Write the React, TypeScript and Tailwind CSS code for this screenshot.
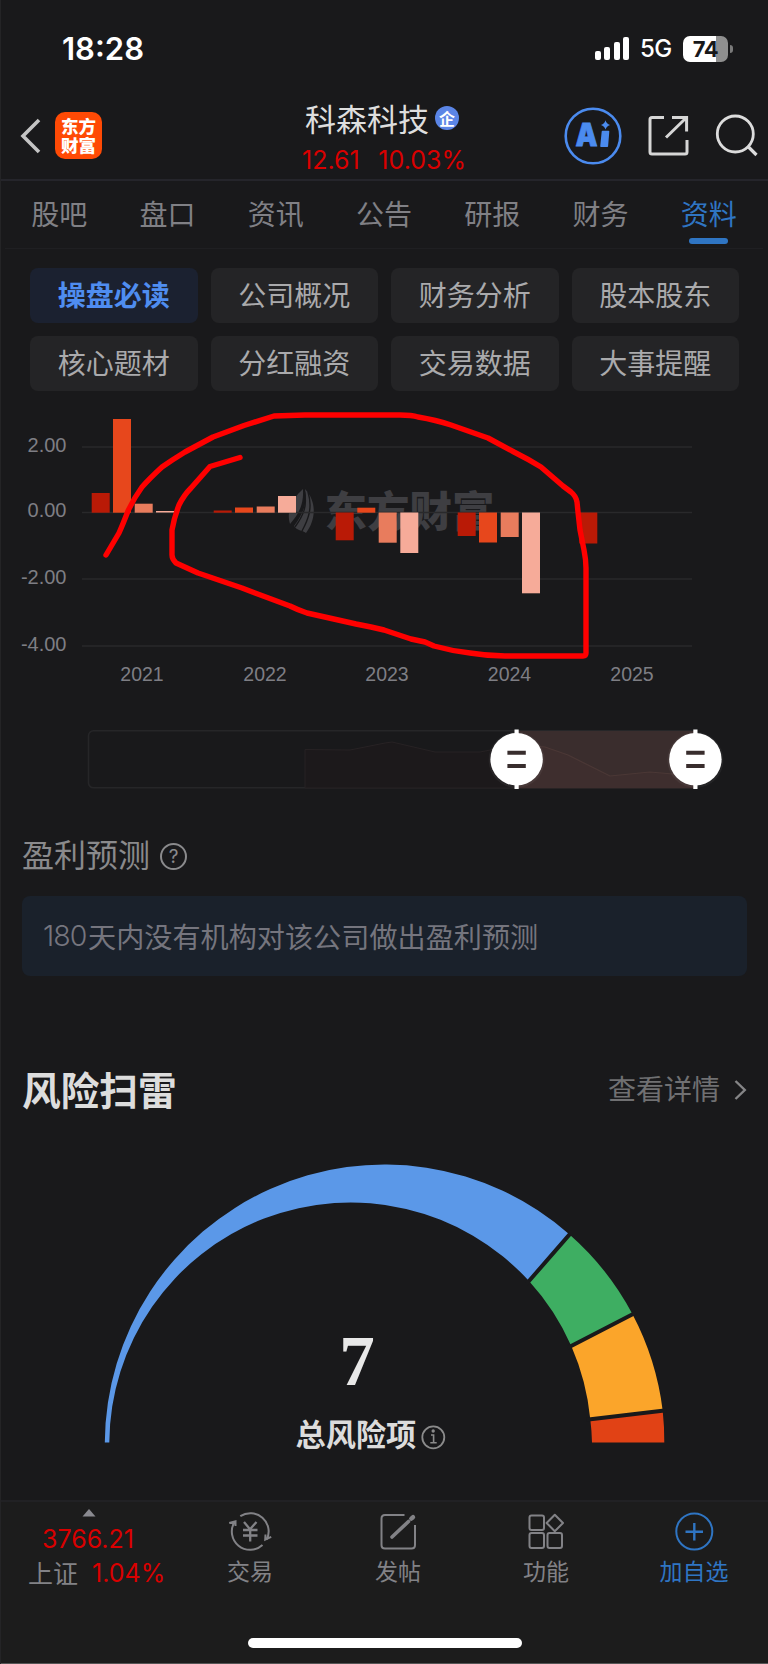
import { clsx } from "clsx";
import type { ReactNode } from "react";

const TABS = ["股吧", "盘口", "资讯", "公告", "研报", "财务", "资料"];

const SECTIONS = [
  "操盘必读",
  "公司概况",
  "财务分析",
  "股本股东",
  "核心题材",
  "分红融资",
  "交易数据",
  "大事提醒",
];

const GRID_LINES = [
  { y: 447, label: "2.00" },
  { y: 512.5, label: "0.00" },
  { y: 579, label: "-2.00" },
  { y: 646, label: "-4.00" },
];

const YEARS = [
  { x: 142, label: "2021" },
  { x: 265, label: "2022" },
  { x: 387, label: "2023" },
  { x: 509.5, label: "2024" },
  { x: 632, label: "2025" },
];

// Q1..Q4 colours
const QUARTERS = ["#b91a06", "#e7471c", "#e87c5d", "#f6ab99"];

type Bar = { x: number; top: number; bottom: number; q: number };

const BARS: Bar[] = [
  { x: 91.7, top: 493, bottom: 512.7, q: 0 },
  { x: 113, top: 419, bottom: 512.7, q: 1 },
  { x: 134.7, top: 503.7, bottom: 512.7, q: 2 },
  { x: 156, top: 511, bottom: 512.5, q: 3 },
  { x: 213.7, top: 510.5, bottom: 512.7, q: 0 },
  { x: 235, top: 507.5, bottom: 512.7, q: 1 },
  { x: 256.7, top: 506.5, bottom: 512.7, q: 2 },
  { x: 278, top: 496, bottom: 512.7, q: 3 },
  { x: 335.7, top: 512.5, bottom: 540.3, q: 0 },
  { x: 357.3, top: 507.7, bottom: 512.7, q: 1 },
  { x: 378.7, top: 512.5, bottom: 542.7, q: 2 },
  { x: 400.3, top: 512.5, bottom: 553, q: 3 },
  { x: 457.7, top: 512.5, bottom: 536, q: 0 },
  { x: 479, top: 512.5, bottom: 542.5, q: 1 },
  { x: 500.7, top: 512.5, bottom: 537, q: 2 },
  { x: 522, top: 512.5, bottom: 593.3, q: 3 },
  { x: 579.3, top: 512.5, bottom: 543.5, q: 0 },
];

const MARKER =
  "M106 555 L119 533 Q123 524 128 511 Q134 498 142 487 Q150 478 162 467 Q172 460 185 452 L213 437 L244 425.5 L274 416 L305 415 L400 415 Q412 415 418 417 Q436 420 451 425 L488 438 L514 452 Q528 459 541 467 L563 486 L571 492 Q576 496 577 502 L578 512 L580 530 L584 550 Q586 560 586 568 L586 653 Q586 656 583 656 L505 656 Q488 656 470 653 Q452 651 434 646 L425 642 L411 639 L384 630 L371 627 L356 624 L307 613 Q298 610 290 606 L255 593 L242 588 L198 573 L176 563 Q172 559 172 555 L172 530 Q174 518 179 505 Q184 495 191 488 L210 466.5 L240 457.5";

function StatusBar() {
  return (
    <div className="flex h-[90px] items-start justify-between pl-[62px] pr-[35px]">
      <span className="mt-[31px] font-[Inter] text-[31px] leading-9 font-semibold text-white">18:28</span>
      <div className="mt-[35px] flex h-[27px] items-center">
        <div className="mr-[11px] flex h-[23px] items-end gap-[3.3px]">
          <span className="h-[9px] w-[6px] rounded-[2px] bg-white" />
          <span className="h-[13px] w-[6px] rounded-[2px] bg-white" />
          <span className="h-[18px] w-[6px] rounded-[2px] bg-white" />
          <span className="h-[23px] w-[6px] rounded-[2px] bg-white" />
        </div>
        <span className="mt-px mr-[11px] w-[32px] font-[Inter] text-[24px] leading-none font-medium tracking-[-0.5px] text-white">5G</span>
        <div className="flex h-[26px] w-[45px] items-center justify-center rounded-[7px] bg-linear-to-r from-white from-74% to-[#8f8f8f] to-74% font-[Inter] text-[22px] leading-none font-bold tracking-[-0.5px] text-[#18181a]">
          74
        </div>
        <span className="ml-[2px] h-2 w-[3px] rounded-r-full bg-[#7a7a7a]" />
      </div>
    </div>
  );
}

function Header() {
  return (
    <header className="flex h-[91px] items-start border-b-2 border-[#25252b]">
      <svg className="mt-[28px] ml-[20px]" width="21" height="36" viewBox="0 0 21 36" fill="none" stroke="#c4c4c4" strokeWidth="3.6">
        <path d="M19 2 L3 18 L19 34" />
      </svg>
      <div className="mt-[22px] ml-[14px] flex size-[47px] items-center justify-center rounded-[10px] bg-[#ff4a05] pb-px text-center font-['Noto_Sans_CJK_SC',sans-serif] text-[17.5px] leading-[19.5px] font-black text-white">
        <span className="w-[35px] break-all">东方财富</span>
      </div>
      <div className="mt-[12px] ml-[199px] w-[169px]">
        <div className="flex items-center pl-1">
          <h1 className="text-[31px] leading-8 text-[#dedede]">科森科技</h1>
          <span className="ml-[6px] flex size-6 items-center justify-center rounded-full bg-[#5b85e6] text-[16px] leading-none font-bold text-white">
            企
          </span>
        </div>
        <div className="mt-[11px] flex justify-between pl-px font-[Inter] text-[25px] leading-[30px] text-[#d90000]">
          <span>12.61</span>
          <span className="mr-1">10.03%</span>
        </div>
      </div>
      <svg className="mt-[17px] ml-[94px]" width="204" height="60" viewBox="564 107 204 60" fill="none">
        <circle cx="593" cy="136" r="27.3" stroke="#4b8bef" strokeWidth="2.6" />
        <text
          x="575.5"
          y="146"
          fontFamily="Inter, sans-serif"
          fontSize="32"
          fontWeight="900"
          fill="#4b8bef"
          stroke="#4b8bef"
          strokeWidth="0.8"
          textLength="22"
          lengthAdjust="spacingAndGlyphs"
        >
          A
        </text>
        <path d="M602.5 131.5 H608.5 L607.3 146.3 H601 Z" fill="#4b8bef" stroke="#4b8bef" strokeWidth="1.6" strokeLinejoin="round" />
        <path d="M605.5 120.3 Q606.5 124 610 125 Q606.5 126 605.5 129.5 Q604.5 126 601 125 Q604.5 124 605.5 120.3 Z" fill="#4b8bef" />
        <path d="M664 117.4 H652 Q650 117.4 650 119.4 V152 Q650 154 652 154 H685 Q687 154 687 152 V140 M672 117.4 H686.6 V131.5 M686 118 L666 137.5" stroke="#d6d6d6" strokeWidth="3" />
        <circle cx="735.3" cy="134" r="18" stroke="#dcdcdc" strokeWidth="2.8" />
        <path d="M748 146.5 L756.5 155" stroke="#dcdcdc" strokeWidth="3.2" />
      </svg>
    </header>
  );
}

function TabBar() {
  return (
    <nav className="mx-[5px] flex h-[68px] border-b border-[#1f1f22]">
      {TABS.map((tab) => {
        const active = tab === "资料";
        return (
          <div
            key={tab}
            className={clsx(
              "flex w-[108.3px] flex-col items-center pt-[17px] text-[28px] leading-[30px]",
              active ? "text-[#2f75c3]" : "text-[#808085]"
            )}
          >
            {tab}
            {active && <span className="mt-[10px] h-[6px] w-[39px] rounded-full bg-[#2f75c3]" />}
          </div>
        );
      })}
    </nav>
  );
}

function SectionGrid() {
  return (
    <div className="grid h-[151px] grid-cols-4 content-start gap-x-[13px] gap-y-[13px] pt-[19px] pr-[29px] pl-[30px]">
      {SECTIONS.map((name, i) => (
        <button
          key={name}
          type="button"
          className={clsx(
            "flex h-[55px] items-center justify-center rounded-lg pb-[3px] text-[28px] leading-none",
            i === 0 ? "bg-[#1b2130] font-bold text-[#4f8df0]" : "bg-[#242426] text-[#aaaaac]"
          )}
        >
          {name}
        </button>
      ))}
    </div>
  );
}

function ProfitChart() {
  return (
    <svg className="block" width="768" height="300" viewBox="0 400 768 300" fontFamily="Liberation Sans, sans-serif">
      <g fill="#3e3e42">
        <path d="M303 489 C292 499 286 511 290 524 C298 515 304 505 303 489 Z" />
        <path d="M305 489 C308 504 302 515 294 526 C297 531 302 530 306 533 C315 521 318 503 305 489 Z" />
        <text x="324.5" y="526.5" fontFamily="Noto Sans CJK SC, sans-serif" fontSize="42.5" fontWeight="900">
          东方财富
        </text>
      </g>
      <path d="M304 490 C308 506 303 516 295 527 M308 492 C313 508 308 520 302 531" fill="none" stroke="#19191b" strokeWidth="1.4" />
      {GRID_LINES.map((line) => (
        <g key={line.label}>
          <path d={`M82 ${line.y} H692`} stroke="#29292b" strokeWidth="1.6" />
          <text x="66.5" y={line.y + 4.8} textAnchor="end" fontSize="20" fill="#7e7e84">
            {line.label}
          </text>
        </g>
      ))}
      {YEARS.map((year) => (
        <text key={year.label} x={year.x} y="681" textAnchor="middle" fontSize="19.5" fill="#7e7e84">
          {year.label}
        </text>
      ))}
      {BARS.map((bar) => (
        <rect key={bar.x} x={bar.x} y={bar.top} width="18" height={bar.bottom - bar.top} fill={QUARTERS[bar.q]} />
      ))}
      <path d={MARKER} fill="none" stroke="#ff0000" strokeWidth="5.4" strokeLinecap="round" strokeLinejoin="round" />
    </svg>
  );
}

function SliderHandle({ x }: { x: number }) {
  return (
    <g>
      <circle cx={x} cy="760" r="28" fill="#ffffff" opacity="0.05" />
      <path d={`M${x} 729.5 V789`} stroke="#ffffff" strokeWidth="4.2" />
      <circle cx={x} cy="759.3" r="26.2" fill="#ffffff" />
      <path d={`M${x - 9.2} 752.8 h18.4 M${x - 9.2} 766 h18.4`} stroke="#382d2d" strokeWidth="4" />
    </g>
  );
}

function RangeSlider() {
  const trend = "305 749.5 350 750 385 743 392 742 435 752 480 752 516 745 545 747 568 755 610 776 650 772 695 776";
  return (
    <svg className="block" width="768" height="100" viewBox="0 700 768 100" fill="none">
      <rect x="88.5" y="730.8" width="607" height="57" rx="5" stroke="#262628" strokeWidth="1.6" />
      <polygon points={`305 788 ${trend} 695 788`} fill="#1c191b" stroke="#272224" />
      <rect x="516.5" y="731" width="179" height="57.3" fill="#3a2d2d" />
      <polygon points="516 788 516 745 545 747 568 755 610 776 650 772 695 776 695 788" fill="#3e2e2e" />
      <polyline points="516 745 545 747 568 755 610 776 650 772 695 776" stroke="#4b3836" strokeWidth="1.2" />
      <SliderHandle x={516.6} />
      <SliderHandle x={695.4} />
    </svg>
  );
}

function Forecast() {
  return (
    <section className="h-[260px] px-[22px] pt-[36px]">
      <div className="flex items-center">
        <h2 className="text-[32px] leading-[34px] text-[#8a8a8c]">盈利预测</h2>
        <span className="mt-[6px] ml-[10px] flex size-[27px] items-center justify-center rounded-full border-2 border-[#8a8a8c] font-[Inter] text-[19px] leading-none text-[#8a8a8c]">
          ?
        </span>
      </div>
      <div className="mt-[26px] flex h-[80px] w-[725px] items-center rounded-lg bg-[#1a212b] pt-px pl-[21px] text-[28.15px] leading-none text-[#75757e]">
        <span className="w-[45px] font-[Inter] text-[28.5px] font-light tracking-[-1px]">180</span>
        天内没有机构对该公司做出盈利预测
      </div>
    </section>
  );
}

function RiskGauge() {
  return (
    <section className="h-[440px]">
      <div className="flex h-[60px] items-center justify-between pr-[21px] pb-1 pl-[22px]">
        <h2 className="text-[38.7px] leading-none font-bold text-[#dddddd]">风险扫雷</h2>
        <div className="flex items-center text-[28px] leading-none text-[#707072]">
          查看详情
          <svg className="mt-[3px] ml-[14px]" width="13" height="20" viewBox="0 0 13 20" fill="none" stroke="#858587" strokeWidth="2.4">
            <path d="M1.5 1 L10.8 10 L1.5 19" />
          </svg>
        </div>
      </div>
      <svg className="block" width="768" height="380" viewBox="0 1120 768 380">
        <path d="M104.8 1442.6 A279.7 279.7 0 0 1 569.5 1234.5 L529 1281 A241.5 241.5 0 0 0 109.3 1442.6 Z" fill="#5b98e8" />
        <path d="M569.5 1234.5 A279.7 279.7 0 0 1 632.5 1314.3 L571.3 1346 A241.5 241.5 0 0 0 529 1281 Z" fill="#3eae62" />
        <path d="M632.5 1314.3 A279.7 279.7 0 0 1 662.7 1410.7 L590.3 1419.3 A241.5 241.5 0 0 0 571.3 1346 Z" fill="#fba52a" />
        <path d="M662.7 1410.7 A279.7 279.7 0 0 1 664.3 1442.6 L592 1442.6 A241.5 241.5 0 0 0 590.3 1419.3 Z" fill="#e14215" />
        <path d="M572 1231.6 L526.4 1284 M636 1312.5 L567.8 1347.8 M666.6 1410.2 L586.4 1419.8" stroke="#19191b" strokeWidth="4" />
        <text x="357" y="1385" textAnchor="middle" fontFamily="Liberation Serif, serif" fontSize="71" fontWeight="700" fill="#e8e8e8">
          7
        </text>
        <text x="295.5" y="1445.5" fontFamily="Noto Sans CJK SC, sans-serif" fontSize="30.2" fontWeight="700" fill="#dcdcdc">
          总风险项
        </text>
        <g fill="none" stroke="#8b8b8b" strokeWidth="1.8">
          <circle cx="433.3" cy="1437.3" r="11" />
          <path d="M431 1435 H433.6 V1442.5 M430.3 1442.8 H436.7" strokeWidth="1.6" />
          <circle cx="433.2" cy="1431" r="0.8" />
        </g>
      </svg>
    </section>
  );
}

function NavItem({ label, active, children }: { label: string; active?: boolean; children: ReactNode }) {
  return (
    <div
      className={clsx(
        "flex w-[148px] flex-col items-center pt-[9px] text-[23px] leading-6",
        active ? "text-[#2f75c3]" : "text-[#828286]"
      )}
    >
      <svg width="44" height="42" viewBox="0 0 44 42" fill="none" stroke="currentColor" strokeWidth="2">
        {children}
      </svg>
      <span className="mt-[5px]">{label}</span>
    </div>
  );
}

function BottomNav() {
  return (
    <footer className="h-[164px] border-t-2 border-b border-t-[#212124] border-b-[#555555] bg-[#1c1c1c]">
      <div className="flex h-[136px]">
        <div className="w-[176px] pt-[7px] font-[Inter] text-[25px] leading-[30px] text-[#d90000]">
          <svg className="ml-[82px] block" width="14" height="8" viewBox="0 0 14 8">
            <path d="M7 0 L13.5 7.5 H0.5 Z" fill="#8a8a90" />
          </svg>
          <div className="mt-[7px] pl-[42px] leading-[30px]">3766.21</div>
          <div className="mt-[4px] flex items-center pl-[28px] leading-[30px]">
            <span className="-mt-[2px] w-[64px] font-['Noto_Sans_CJK_SC',sans-serif] text-[25px] text-[#828286]">上证</span>
            1.04%
          </div>
        </div>
        <NavItem label="交易">
          <path d="M12.3 5.2 A18.3 18.3 0 0 1 38.8 28.5 M34.5 34 A18.3 18.3 0 0 1 6.5 11 M1.2 12 L7.5 10.3 L7.5 15 M43.2 25.8 L37.2 28.6 L37.5 23.5" />
          <path d="M16 11 L22 18.2 L28.5 11 M22.2 18 V30.5 M15 19 H29.5 M15 24.5 H29.5" strokeWidth="2.3" />
        </NavItem>
        <NavItem label="发帖">
          <path d="M28.5 4 H9 Q5.5 4 5.5 7.5 V34 Q5.5 37.5 9 37.5 H35.5 Q39 37.5 39 34 V14" />
          <path d="M16 26 L32.5 10.5" strokeWidth="3.6" strokeLinecap="round" />
          <path d="M35.3 7.6 L37 6.2" strokeWidth="4.4" strokeLinecap="round" />
        </NavItem>
        <NavItem label="功能">
          <rect x="5.5" y="4.5" width="14.5" height="14.5" rx="2" />
          <rect x="5.5" y="22" width="14.5" height="15" rx="2" />
          <rect x="23.5" y="22" width="14.5" height="15" rx="2" />
          <path d="M30.8 3.8 L39 12 L30.8 20.2 L22.6 12 Z" strokeLinejoin="round" />
        </NavItem>
        <NavItem label="加自选" active>
          <circle cx="22.3" cy="20.5" r="18" />
          <path d="M22.3 12 V29.5 M13.5 20.8 H31" strokeWidth="2.4" />
        </NavItem>
      </div>
      <div className="ml-[248px] h-[10px] w-[274px] rounded-full bg-white" />
    </footer>
  );
}

export default function App() {
  return (
    <div className="h-[1664px] w-[768px] overflow-hidden border-l border-[#242426] bg-[#19191b] font-['Noto_Sans_CJK_SC',sans-serif]">
      <div className="-ml-px">
        <StatusBar />
        <Header />
        <TabBar />
        <SectionGrid />
        <ProfitChart />
        <RangeSlider />
        <Forecast />
        <RiskGauge />
        <BottomNav />
      </div>
    </div>
  );
}
